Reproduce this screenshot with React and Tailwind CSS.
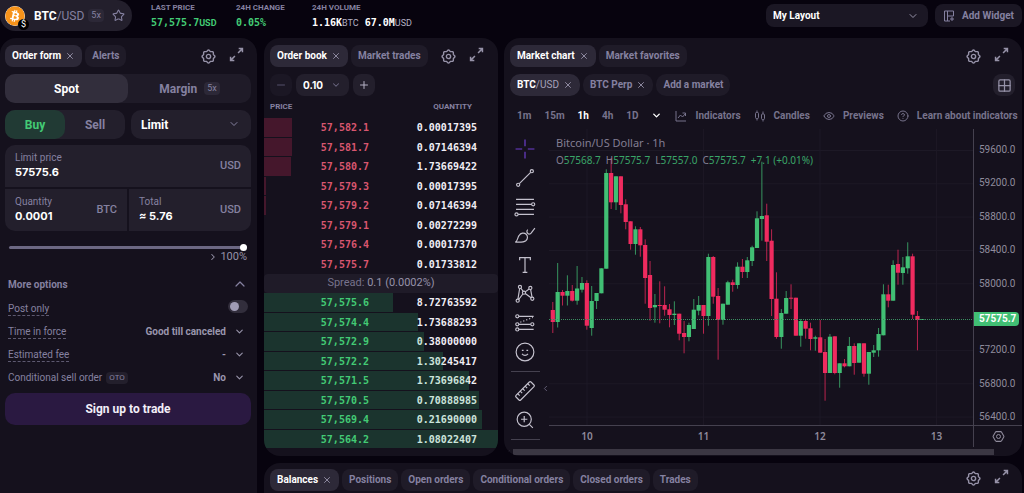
import React from "react";
import { X, ChevronDown, ChevronUp, ChevronRight, ChevronLeft, Star, Minus, Plus, Eye, CircleHelp, Grid2x2, Hexagon } from "lucide-react";
import { FaBitcoin } from "react-icons/fa";

const cogPath =
  Array.from({ length: 96 }, (_, i) => {
    const a = (i / 96) * Math.PI * 2;
    const r = 9.4 + 0.9 * Math.cos(8 * a);
    return `${i ? "L" : "M"}${(12 + r * Math.cos(a)).toFixed(2)} ${(12 + r * Math.sin(a)).toFixed(2)}`;
  }).join("") + "Z";

function Cog() {
  return (
    <svg viewBox="0 0 24 24" className="size-[15px]" fill="none" stroke="currentColor" strokeWidth="2.2">
      <path d={cogPath} />
      <circle cx="12" cy="12" r="3.4" />
    </svg>
  );
}

function PanelActions() {
  return (
    <div className="flex items-center gap-[13px] text-[#9692a8]">
      <button aria-label="Widget settings"><Cog /></button>
      <button aria-label="Expand widget" className="pb-1">
        <svg viewBox="0 0 24 24" className="block size-[15px]" fill="none" stroke="currentColor" strokeWidth="2.4">
          <path d="M14.500 9.500l6.500-6.500M15.500 2.500h6v6M9.500 14.500l-6.500 6.500M2.500 15.500v6h6" />
        </svg>
      </button>
    </div>
  );
}

function Tab({ children, active, closable, round = "rounded-lg" }) {
  return (
    <button
      className={`flex h-[22px] items-center gap-1 whitespace-nowrap px-[7px] pb-px text-[10px] font-bold ${round} ${
        active ? "bg-[#2d2938] text-white" : "bg-[#1f1b28] text-[#8581a0]"
      }`}
    >
      <span>{children}</span>
      {closable && <X className="size-[10px] text-[#9692a8]" strokeWidth={2.2} />}
    </button>
  );
}

function Stat({ label, children }) {
  return (
    <div className="flex flex-col gap-1">
      <dt className="text-[8px] leading-[10px] font-bold text-[#8581a0]">{label}</dt>
      <dd className="flex h-3 items-baseline gap-1.5 font-['DejaVu_Sans_Mono',monospace] text-[10px] leading-3 font-bold">{children}</dd>
    </div>
  );
}

function Unit({ children, className }) {
  return <span className={`font-[Roboto,sans-serif] text-[9px] leading-3 ${className}`}>{children}</span>;
}

function Header() {
  return (
    <header className="flex h-[38px] items-start justify-between">
      <div className="flex items-start gap-[19px]">
        <div className="flex h-[31px] w-[132px] items-center rounded-r-2xl rounded-bl-2xl bg-[#231f2c] pl-[5px]">
          <div className="relative mr-[9px]">
            <FaBitcoin className="size-5 rounded-full bg-white text-[#f7931a]" />
            <span className="absolute -right-1 -bottom-1 flex size-[11px] items-center justify-center rounded-full bg-black text-[9px] leading-none text-white">$</span>
          </div>
          <span className="text-[12px] text-[#8581a0]"><b className="text-white">BTC</b>/USD</span>
          <span className="ml-1 rounded bg-[#2c2837] px-[3px] text-[9px] leading-[13px] text-[#8581a0]">5x</span>
          <button aria-label="Add to favorites" className="ml-2 text-[#8581a0]"><Star className="size-[13px]" /></button>
        </div>
        <dl className="grid grid-cols-[67px_58px_auto] gap-[18px] pt-[3px]">
          <Stat label="LAST PRICE">
            <span className="text-[#43cb75]">57,575.7<Unit>USD</Unit></span>
          </Stat>
          <Stat label="24H CHANGE"><span className="text-[#43cb75]">0.05%</span></Stat>
          <Stat label="24H VOLUME">
            <span className="text-white">1.16K<Unit className="font-normal text-[#b5b1c4]">BTC</Unit></span>
            <span className="text-white">67.0M<Unit className="font-normal text-[#b5b1c4]">USD</Unit></span>
          </Stat>
        </dl>
      </div>
      <div className="flex gap-[7px] pt-1 pr-0.5">
        <div className="relative">
          <select aria-label="Layout" className="block h-[23px] w-[162px] appearance-none rounded-lg bg-[#1b1724] px-[7px] text-[10px] font-bold text-white">
            <option>My Layout</option>
          </select>
          <ChevronDown className="pointer-events-none absolute top-[6px] right-[9px] size-3 text-[#9692a8]" />
        </div>
        <button className="flex h-[23px] items-center gap-[7px] rounded-lg bg-[#1b1724] px-[8px] text-[10px] font-bold text-[#8581a0]">
          <svg viewBox="0 0 24 24" className="size-3" fill="none" stroke="currentColor" strokeWidth="2">
            <path d="M14 22H3V2h18v10M9 2v20M9 12h12M18 14v8M14 18h8" />
          </svg>
          Add Widget
        </button>
      </div>
    </header>
  );
}

function AmountField({ id, label, value, unit, className }) {
  return (
    <div className={`flex h-[42px] min-w-0 flex-1 items-center bg-[#231f2c] px-[10px] ${className}`}>
      <div className="flex min-w-0 flex-1 flex-col pb-0.5">
        <label htmlFor={id} className="text-[10px] leading-[14px] text-[#8581a0]">{label}</label>
        <input id={id} defaultValue={value} className="h-[15px] w-full bg-transparent font-[Inter,sans-serif] text-[11px] font-bold text-white outline-none" />
      </div>
      <span className="text-[11px] font-medium text-[#8581a0]">{unit}</span>
    </div>
  );
}

function OptionRow({ id, label, badge, value }) {
  return (
    <div className="flex h-[23px] items-center justify-between">
      <div className="flex items-center gap-1">
        <label htmlFor={id} className={`border-b border-dashed text-[10px] leading-[13px] text-[#8581a0] ${badge ? "border-transparent" : "border-[#5d5970]"}`}>{label}</label>
        {badge && <span className="rounded bg-[#231f2c] px-[3px] text-[8px] leading-3 text-[#8581a0]">{badge}</span>}
      </div>
      <div className="relative flex items-center">
        <select id={id} className="block h-[15px] w-[110px] appearance-none bg-transparent pr-[22px] text-[10px] font-bold text-[#9a96ad] [text-align-last:right]">
          <option>{value}</option>
        </select>
        <ChevronDown className="pointer-events-none absolute right-[3px] size-[11px] text-[#9692a8]" strokeWidth={2.5} />
      </div>
    </div>
  );
}

function OrderForm() {
  return (
    <section className="w-[257px] shrink-0 rounded-t-2xl bg-[#15111d] pt-[7px] pr-1.5 pl-[5px]">
      <div className="flex h-[22px] items-center justify-between pr-[7px]">
        <div className="flex gap-[3px]">
          <Tab active closable>Order form</Tab>
          <Tab>Alerts</Tab>
        </div>
        <PanelActions />
      </div>
      <div className="mt-[7px] flex h-[29px] rounded-[10px] bg-[#1f1b28] text-[12px] font-bold">
        <button className="flex-1 rounded-[10px] bg-[#322e3c] text-white">Spot</button>
        <button className="flex flex-1 items-center justify-center gap-[7px] text-[#8581a0]">
          Margin
          <span className="rounded bg-[#2c2837] px-[3px] text-[9px] leading-[13px] font-normal">5x</span>
        </button>
      </div>
      <div className="mt-[7px] flex h-[29px] gap-1.5 text-[12px] font-bold">
        <div className="flex flex-1 rounded-[10px] bg-[#231f2c]">
          <button className="flex-1 rounded-[10px] bg-[#213a34] text-[#43cb75]">Buy</button>
          <button className="flex-1 text-[#8581a0]">Sell</button>
        </div>
        <div className="relative flex-1">
          <select aria-label="Order type" className="block size-full appearance-none rounded-[10px] bg-[#231f2c] px-[10px] text-white">
            <option>Limit</option>
          </select>
          <ChevronDown className="pointer-events-none absolute top-2 right-[11px] size-3 text-[#8581a0]" />
        </div>
      </div>
      <div className="mt-1.5 flex flex-col gap-0.5">
        <AmountField id="limit-price" label="Limit price" value="57575.6" unit="USD" className="flex-none rounded-t-[10px]" />
        <div className="flex gap-0.5">
          <AmountField id="quantity" label="Quantity" value="0.0001" unit="BTC" className="rounded-bl-[10px]" />
          <AmountField id="total" label="Total" value="≈ 5.76" unit="USD" className="rounded-br-[10px]" />
        </div>
      </div>
      <div className="px-1 pt-3">
        <input
          type="range"
          aria-label="Share of balance"
          defaultValue="100"
          className="block h-2 w-full appearance-none bg-transparent [&::-webkit-slider-runnable-track]:h-[3px] [&::-webkit-slider-runnable-track]:rounded-full [&::-webkit-slider-runnable-track]:bg-[#6c6883] [&::-webkit-slider-thumb]:-mt-0.5 [&::-webkit-slider-thumb]:size-[7px] [&::-webkit-slider-thumb]:appearance-none [&::-webkit-slider-thumb]:rounded-full [&::-webkit-slider-thumb]:bg-white"
        />
        <div className="flex items-center justify-end gap-0.5 text-[11px] leading-3 text-[#9692a8]">
          <ChevronRight className="size-[10px]" strokeWidth={2.5} />100%
        </div>
      </div>
      <div className="px-[3px] pt-3">
        <button className="flex h-[18px] w-full items-center justify-between text-[10px] font-bold text-[#8581a0]">
          More options<ChevronUp className="size-4" strokeWidth={1.8} />
        </button>
        <div className="mt-1 flex h-[23px] items-center justify-between">
          <label htmlFor="post-only" className="border-b border-dashed border-[#5d5970] text-[10px] leading-[13px] text-[#8581a0]">Post only</label>
          <input
            id="post-only"
            type="checkbox"
            role="switch"
            className="mb-1 flex h-[13px] w-5 appearance-none items-center rounded-full bg-[#322e3c] px-0.5 before:size-[9px] before:rounded-full before:bg-[#a09cb5] checked:justify-end"
          />
        </div>
        <OptionRow id="tif" label="Time in force" value="Good till canceled" />
        <OptionRow id="fee" label="Estimated fee" value="-" />
        <OptionRow id="oto" label="Conditional sell order" badge="OTO" value="No" />
      </div>
      <button className="mt-1 mb-2 h-8 w-full rounded-[10px] bg-[#2a1941] text-[12px] font-bold text-[#f2eef8]">Sign up to trade</button>
    </section>
  );
}

const asks = [
  ["57,582.1", "0.00017395", 12],
  ["57,581.7", "0.07146394", 12],
  ["57,580.7", "1.73669422", 11.6],
  ["57,579.3", "0.00017395", 0.8],
  ["57,579.2", "0.07146394", 0.8],
  ["57,579.1", "0.00272299", 0],
  ["57,576.4", "0.00017370", 0],
  ["57,575.7", "0.01733812", 0],
];
const bids = [
  ["57,575.6", "8.72763592", 55],
  ["57,574.4", "1.73688293", 66],
  ["57,572.9", "0.38000000", 68.3],
  ["57,572.2", "1.30245417", 76.5],
  ["57,571.5", "1.73696842", 87.4],
  ["57,570.5", "0.70888985", 92],
  ["57,569.4", "0.21690000", 93.3],
  ["57,564.2", "1.08022407", 100],
];

function BookSide({ rows, side }) {
  const bar = side === "ask" ? "bg-[#d92a5a]/25" : "bg-[#38c172]/20";
  const price = side === "ask" ? "text-[#d8566f]" : "text-[#43cb75]";
  return (
    <div className="grid h-[156px] grid-rows-8 font-['DejaVu_Sans_Mono',monospace] text-[10px] font-bold">
      {rows.map(([p, q, depth]) => (
        <div key={p} className="relative grid grid-cols-[105px_1fr] items-center pr-[21px] text-right">
          <span className={`relative z-10 ${price}`}>{p}</span>
          <span className="text-[#f0eef5]">{q}</span>
          <div className={`absolute inset-y-0 left-0 mb-px ${bar}`} style={{ width: `${depth}%` }} />
        </div>
      ))}
    </div>
  );
}

function OrderBook() {
  return (
    <section className="w-[234px] shrink-0 overflow-hidden rounded-2xl bg-[#15111d] pt-[7px] pb-[7px]">
      <div className="flex h-[22px] items-center justify-between pr-[14px] pl-1.5">
        <div className="flex gap-[3px]">
          <Tab active closable>Order book</Tab>
          <Tab>Market trades</Tab>
        </div>
        <PanelActions />
      </div>
      <div className="mt-[7px] flex gap-1 pl-1.5">
        <button aria-label="Decrease grouping" className="flex size-[22px] items-center justify-center rounded-lg bg-[#1b1724] text-[#55516a]"><Minus className="size-3" /></button>
        <div className="relative">
          <select aria-label="Price grouping" className="block h-[22px] w-[53px] appearance-none rounded-lg bg-[#231f2c] px-[7px] font-[Inter,sans-serif] text-[10px] font-bold text-white">
            <option>0.10</option>
          </select>
          <ChevronDown className="pointer-events-none absolute top-1.5 right-2 size-[10px] text-[#6c6883]" strokeWidth={2.5} />
        </div>
        <button aria-label="Increase grouping" className="flex size-[22px] items-center justify-center rounded-lg bg-[#231f2c] text-[#b5b1c4]"><Plus className="size-3" /></button>
      </div>
      <div className="flex h-[22px] items-center justify-between pr-[26px] pl-1.5 text-[8px] font-bold text-[#8581a0]">
        <span>PRICE</span>
        <span>QUANTITY</span>
      </div>
      <BookSide rows={asks} side="ask" />
      <div className="flex h-[19px] items-center justify-center rounded bg-[#1f1b28] text-[11px] text-[#77738c]">
        <span>Spread: <span className="text-[#9692a8]">0.1 (0.0002%)</span></span>
      </div>
      <BookSide rows={bids} side="bid" />
    </section>
  );
}

// One row per hour: direction (1 up, 0 down), high, body top, body bottom, low in plot units.
const candles = [
  [0, 302, 310, 322, 333], [1, 263, 292, 322, 327.5], [0, 290, 292, 295.7, 305.5], [1, 275.3, 291, 295.7, 305.5],
  [0, 285, 291, 300.7, 301.5], [1, 266, 288.5, 300.7, 304.7], [1, 277, 283, 289.7, 292.5], [0, 280.3, 283, 325.7, 329.7],
  [1, 286, 301, 328, 335.7], [1, 293, 293, 301, 309], [1, 268.3, 268.3, 293.3, 293.3], [1, 169.3, 173, 268.7, 268.7],
  [0, 158, 173, 202.3, 209], [1, 176.3, 176.3, 202.3, 210], [0, 176.3, 176.3, 205, 213.3], [0, 199.3, 204.3, 222, 229.3],
  [0, 221.3, 221.3, 244, 249.7], [1, 226.3, 229.3, 244, 254.7], [0, 227, 229.3, 245.3, 256.7], [0, 239.3, 245, 278, 303.7],
  [0, 261, 275, 308, 320.7], [1, 294, 305, 307.3, 322.7], [0, 281.3, 305, 306, 323.3], [0, 286.3, 305, 309.7, 315.7],
  [0, 304, 309.3, 315, 327.3], [1, 301.3, 313.7, 315, 325], [0, 313.7, 313.7, 333.7, 340.3], [0, 321, 333, 337, 353.3],
  [1, 322.7, 325, 337, 341.3], [1, 299, 309.7, 329, 329], [1, 296, 305, 310.7, 315.3], [0, 305, 305, 316, 333.7],
  [1, 253.7, 257, 316, 325.7], [0, 256, 257, 296.7, 303.7], [0, 288, 296, 320, 359.7], [1, 303.7, 303.7, 320, 324.7],
  [1, 280.7, 282.3, 304.7, 304.7], [0, 279.7, 282.3, 285, 291.7], [1, 262.3, 266.7, 285, 288.7], [0, 259, 266.7, 272, 278],
  [1, 257, 260.3, 272, 278], [1, 245.7, 247.3, 261, 266], [1, 211.3, 218.3, 248, 248], [1, 161.7, 216, 219, 240.7],
  [0, 203.7, 215.3, 241.7, 261], [0, 229.3, 240.7, 299, 316], [0, 272.3, 298.7, 337, 338.7], [1, 309, 313, 337, 348.7],
  [1, 291, 298, 313.7, 313.7], [0, 284.3, 297.7, 298.7, 309], [0, 297.7, 297.7, 335.7, 335.7], [1, 319, 321, 335.7, 346.7],
  [0, 319, 321, 328.7, 338.7], [0, 322.7, 328.3, 339, 350.3], [1, 335.7, 337.3, 338.7, 350.7], [0, 320, 337.3, 352.7, 352.7],
  [0, 339, 352, 373, 400.7], [1, 334, 336.7, 373, 373], [0, 336.3, 336.3, 373, 374.3], [1, 363.3, 363.3, 373, 387.7],
  [0, 359, 363.3, 366.3, 367.3], [1, 337, 346, 366.3, 366.3], [0, 343.3, 346, 363, 374.7], [1, 343.3, 343.3, 362.7, 362.7],
  [0, 343.3, 343.3, 373.7, 376.7], [1, 352, 352, 373.7, 384.7], [1, 345, 350.3, 352.7, 357], [1, 328, 334, 350.3, 356.7],
  [1, 284.3, 294.3, 335.3, 335.3], [0, 284.7, 294.3, 300.7, 307.3], [1, 260.3, 265, 300.7, 300.7], [0, 249.7, 264, 272.7, 284.7],
  [1, 257, 267.3, 273, 284.7], [1, 242.3, 256.3, 268.3, 273.7], [0, 253.7, 256.3, 314.7, 319], [0, 311, 316, 320, 350.3],
  [1, 319, 319, 320, 320],
];
const gridY = [150.5, 183.8, 217.1, 250.5, 283.8, 317.1, 350.4, 383.8, 417.1];
const days = [["10", 587], ["11", 703.6], ["12", 820], ["13", 936.6]];
// The empty slot is the one that the last-price tag covers.
const prices = ["59600.0", "59200.0", "58800.0", "58400.0", "58000.0", "", "57200.0", "56800.0", "56400.0"];

function Plot() {
  return (
    <svg viewBox="549 129 424 296" preserveAspectRatio="none" className="block h-[296px] w-full" role="img" aria-label="Hourly candles">
      <g stroke="#1d1926" strokeWidth="1">
        {gridY.map((y) => <line key={y} x1="549" x2="973" y1={y} y2={y} />)}
        {days.map(([d, x]) => <line key={d} x1={x} x2={x} y1="129" y2="425" />)}
      </g>
      {candles.map(([up, hi, top, bottom, lo], i) => {
        const x = 552.8 + i * 4.862;
        return (
          <g key={i} fill={up ? "#41bf74" : "#ef2b5f"}>
            <rect x={x - 0.5} y={hi} width="1" height={lo - hi} opacity="0.75" />
            <rect x={x - 2.1} y={top} width="4.2" height={Math.max(bottom - top, 1)} />
          </g>
        );
      })}
      <line x1="549" x2="973" y1="319.5" y2="319.5" stroke="#3b8f62" strokeDasharray="1 1" />
    </svg>
  );
}

const tools = [
  ["Cross", <path key="p" stroke="#6f3fd0" d="M14 2v8.4M14 17.6V26M2 14h8.4M17.6 14H26" />],
  ["Trend line", <g key="p"><path d="M6.8 21.2 21.2 6.8" /><circle cx="5.3" cy="22.7" r="2" /><circle cx="22.7" cy="5.3" r="2" /></g>],
  ["Fib retracement", <g key="p"><path d="M2.6 4.2h22.8M2.6 10.6h19.8M2.6 17h22.8M5.2 23.4h20.2" /><circle cx="24.4" cy="10.6" r="2" /><circle cx="3.2" cy="23.4" r="2" /></g>],
  ["Brush", <path key="p" d="M1.5 21.8c3-.5 2.600-5 5-8.500 2-3.500 6.500-4 9-1.500s2 6-.5 8.200c-3 2.500-8 1.800-13.500 1.800M17.500 5.800c-1.700 1.800-1.300 3.600.2 5 1.400 1.200 3 .8 4.300-.8l4.600-6" />],
  ["Text", <path key="p" d="M7.200 8V4.700h13.600V8M14 4.700v18.600M11 23.300h6" />],
  ["Pattern", <g key="p"><path d="M5 20.500 7.200 7M8.800 6.700l2.900 4M14.300 11.300l5-3.700M21.200 8.300 23 18.200M14.300 13.400l7.400 5.400M6 21l5.500-7.300" /><circle cx="7.600" cy="5.100" r="2" /><circle cx="20.800" cy="6.400" r="2" /><circle cx="12.700" cy="12.300" r="2" /><circle cx="4.700" cy="22.500" r="2" /><circle cx="23.300" cy="20" r="2" /></g>],
  ["Prediction", <g key="p"><path d="M6.200 5.500H25M6.200 15.700h15M6.200 22.200H25" /><path strokeDasharray="1.500 2.500" d="M8 13 24 7" /><circle cx="4.200" cy="5.500" r="2" /><circle cx="4.200" cy="15.700" r="2" /><circle cx="23.300" cy="15.700" r="2" /><circle cx="4.200" cy="22.200" r="2" /></g>],
  ["Emoji", <g key="p"><circle cx="14" cy="14" r="11.300" /><path d="M10 12h2.200M15.800 12H18M10.200 16.500c2 2.400 5.600 2.400 7.600 0" /></g>],
  null,
  ["Measure", <g key="p" transform="rotate(-45 14 14)"><rect x="0.500" y="9.800" width="27" height="8.400" rx="1.500" /><path d="M5 9.800v3.600M9.500 9.800v3.600M14 9.800v3.600M18.500 9.800v3.600M23 9.800v3.600" /></g>],
  ["Zoom in", <g key="p"><circle cx="13" cy="13" r="9" /><path d="m19.500 19.500 4.500 4.500M13 9v8M9 13h8" /></g>],
  null,
];

function DrawingTools() {
  return (
    <div className="flex w-[45px] shrink-0 flex-col items-center gap-[7px] pt-[9px] pr-[3px]">
      {tools.map((tool, i) =>
        tool ? (
          <button key={tool[0]} aria-label={tool[0]}>
            <svg viewBox="0 0 28 28" className="block size-[22px]" fill="none" stroke="#c4c1cd" strokeWidth="1.5">{tool[1]}</svg>
          </button>
        ) : (
          <hr key={i} className="my-px h-px w-[29px] border-0 bg-[#45414f]" />
        )
      )}
    </div>
  );
}

function Ohlc({ name, value }) {
  return <span>{name}<span className="text-[#3aa568]">{value}</span></span>;
}

function ChartTool({ icon, children }) {
  return <button className="flex items-center gap-2">{icon}{children}</button>;
}

function MarketChart() {
  return (
    <section className="min-w-0 flex-1 overflow-hidden rounded-2xl bg-[#15111d] pt-[7px]">
      <div className="flex h-[22px] items-center justify-between pr-[13px] pl-1.5">
        <div className="flex gap-[3px]">
          <Tab active closable>Market chart</Tab>
          <Tab>Market favorites</Tab>
        </div>
        <PanelActions />
      </div>
      <div className="mt-[7px] flex items-center justify-between pr-[7px] pl-1.5">
        <div className="flex gap-[3px]">
          <Tab active closable round="rounded-[10px]">BTC<span className="font-normal text-[#a5a1b8]">/USD</span></Tab>
          <Tab closable round="rounded-[10px]">BTC Perp</Tab>
          <Tab round="rounded-[10px]">Add a market</Tab>
        </div>
        <button aria-label="Chart grid" className="flex size-[22px] items-center justify-center rounded-lg bg-[#231f2c] text-[#9692a8]"><Grid2x2 className="size-[15px]" strokeWidth={2} /></button>
      </div>
      <div className="flex h-[33px] items-center gap-[13px] pt-1.5 pl-[13px] text-[10px] font-bold whitespace-nowrap text-[#77738c]">
        <button>1m</button>
        <button>15m</button>
        <button className="text-white">1h</button>
        <button>4h</button>
        <button>1D</button>
        <button aria-label="More intervals"><ChevronDown className="size-[11px] text-white" strokeWidth={3} /></button>
        <ChartTool icon={<svg viewBox="0 0 24 24" className="size-3" fill="none" stroke="currentColor" strokeWidth="2"><path d="M2 2v20h20M6 16l5-6 4 4 6-7M15 6h6v6" /></svg>}>Indicators</ChartTool>
        <ChartTool icon={<svg viewBox="0 0 24 24" className="size-3" fill="none" stroke="currentColor" strokeWidth="2"><path d="M6 1v4M6 17v4M18 3v5M18 19v4" /><rect x="3" y="5" width="6" height="12" rx="2" /><rect x="15" y="8" width="6" height="11" rx="2" /></svg>}>Candles</ChartTool>
        <ChartTool icon={<Eye className="size-3" />}>Previews</ChartTool>
        <ChartTool icon={<CircleHelp className="size-3" />}>Learn about indicators</ChartTool>
      </div>
      <div className="flex font-['Noto_Sans',sans-serif]">
        <DrawingTools />
        <div className="relative min-w-0 flex-1">
          <Plot />
          <div className="absolute top-[6px] left-[7px] text-[#827e92]">
            <div className="text-[11px] leading-4">Bitcoin/US Dollar · 1h</div>
            <div className="flex gap-[5px] text-[10px] leading-[18px] whitespace-nowrap">
              <Ohlc name="O" value="57568.7" />
              <Ohlc name="H" value="57575.7" />
              <Ohlc name="L" value="57557.0" />
              <Ohlc name="C" value="57575.7" />
              <Ohlc name="" value="+7.1 (+0.01%)" />
            </div>
          </div>
          <ChevronLeft className="absolute top-[255px] -left-2 size-[9px] text-[#77738c]" />
          <div className="relative h-[22px] border-t border-[#45414f] text-[10px] font-semibold text-[#8f8b9c]">
            {days.map(([d, x]) => (
              <span key={d} className="absolute top-[3px] -translate-x-1/2" style={{ left: `${((x - 549) / 424) * 100}%` }}>{d}</span>
            ))}
          </div>
        </div>
        <div className="w-[49px] shrink-0 border-l border-[#45414f] font-[Roboto,sans-serif] text-[10px] text-[#8f8b9c]">
          <div className="relative h-[296px] pt-[14px]">
            <div className="flex h-[281px] flex-col justify-between">
              {prices.map((p, i) => <span key={i} className="h-[14px] pl-[5px] leading-[14px]">{p}</span>)}
            </div>
            <span className="absolute top-[183px] left-0 w-[45px] rounded-r-sm bg-[#41bf74] pl-[5px] leading-[14px] font-bold text-white">57575.7</span>
          </div>
          <div className="flex h-[22px] items-center justify-center border-t border-[#45414f]">
            <button aria-label="Axis settings" className="relative">
              <Hexagon className="size-[13px] rotate-90" strokeWidth={2} />
              <span className="absolute top-1 left-1 size-[5px] rounded-full border border-current" />
            </button>
          </div>
        </div>
      </div>
      <div className="flex h-[9px] items-start gap-px pt-0.5 text-[#55516a]">
        <ChevronLeft className="size-2" />
        <div className="mr-[28px] h-1.5 flex-1 bg-[#3b3743]" />
      </div>
    </section>
  );
}

export default function App() {
  return (
    <div className="flex min-h-screen flex-col overflow-x-hidden bg-[#07030e] font-[Roboto,'Liberation_Sans',sans-serif]">
      <Header />
      <main className="flex flex-1 gap-[7px] pr-0.5">
        <OrderForm />
        <div className="flex min-w-0 flex-1 flex-col gap-[7px]">
          <div className="flex gap-1.5">
            <OrderBook />
            <MarketChart />
          </div>
          <section className="flex flex-1 items-start justify-between rounded-t-2xl bg-[#15111d] pt-1.5 pr-[13px] pl-1.5">
            <div className="flex gap-[3px]">
              <Tab active closable>Balances</Tab>
              <Tab>Positions</Tab>
              <Tab>Open orders</Tab>
              <Tab>Conditional orders</Tab>
              <Tab>Closed orders</Tab>
              <Tab>Trades</Tab>
            </div>
            <PanelActions />
          </section>
        </div>
      </main>
    </div>
  );
}
